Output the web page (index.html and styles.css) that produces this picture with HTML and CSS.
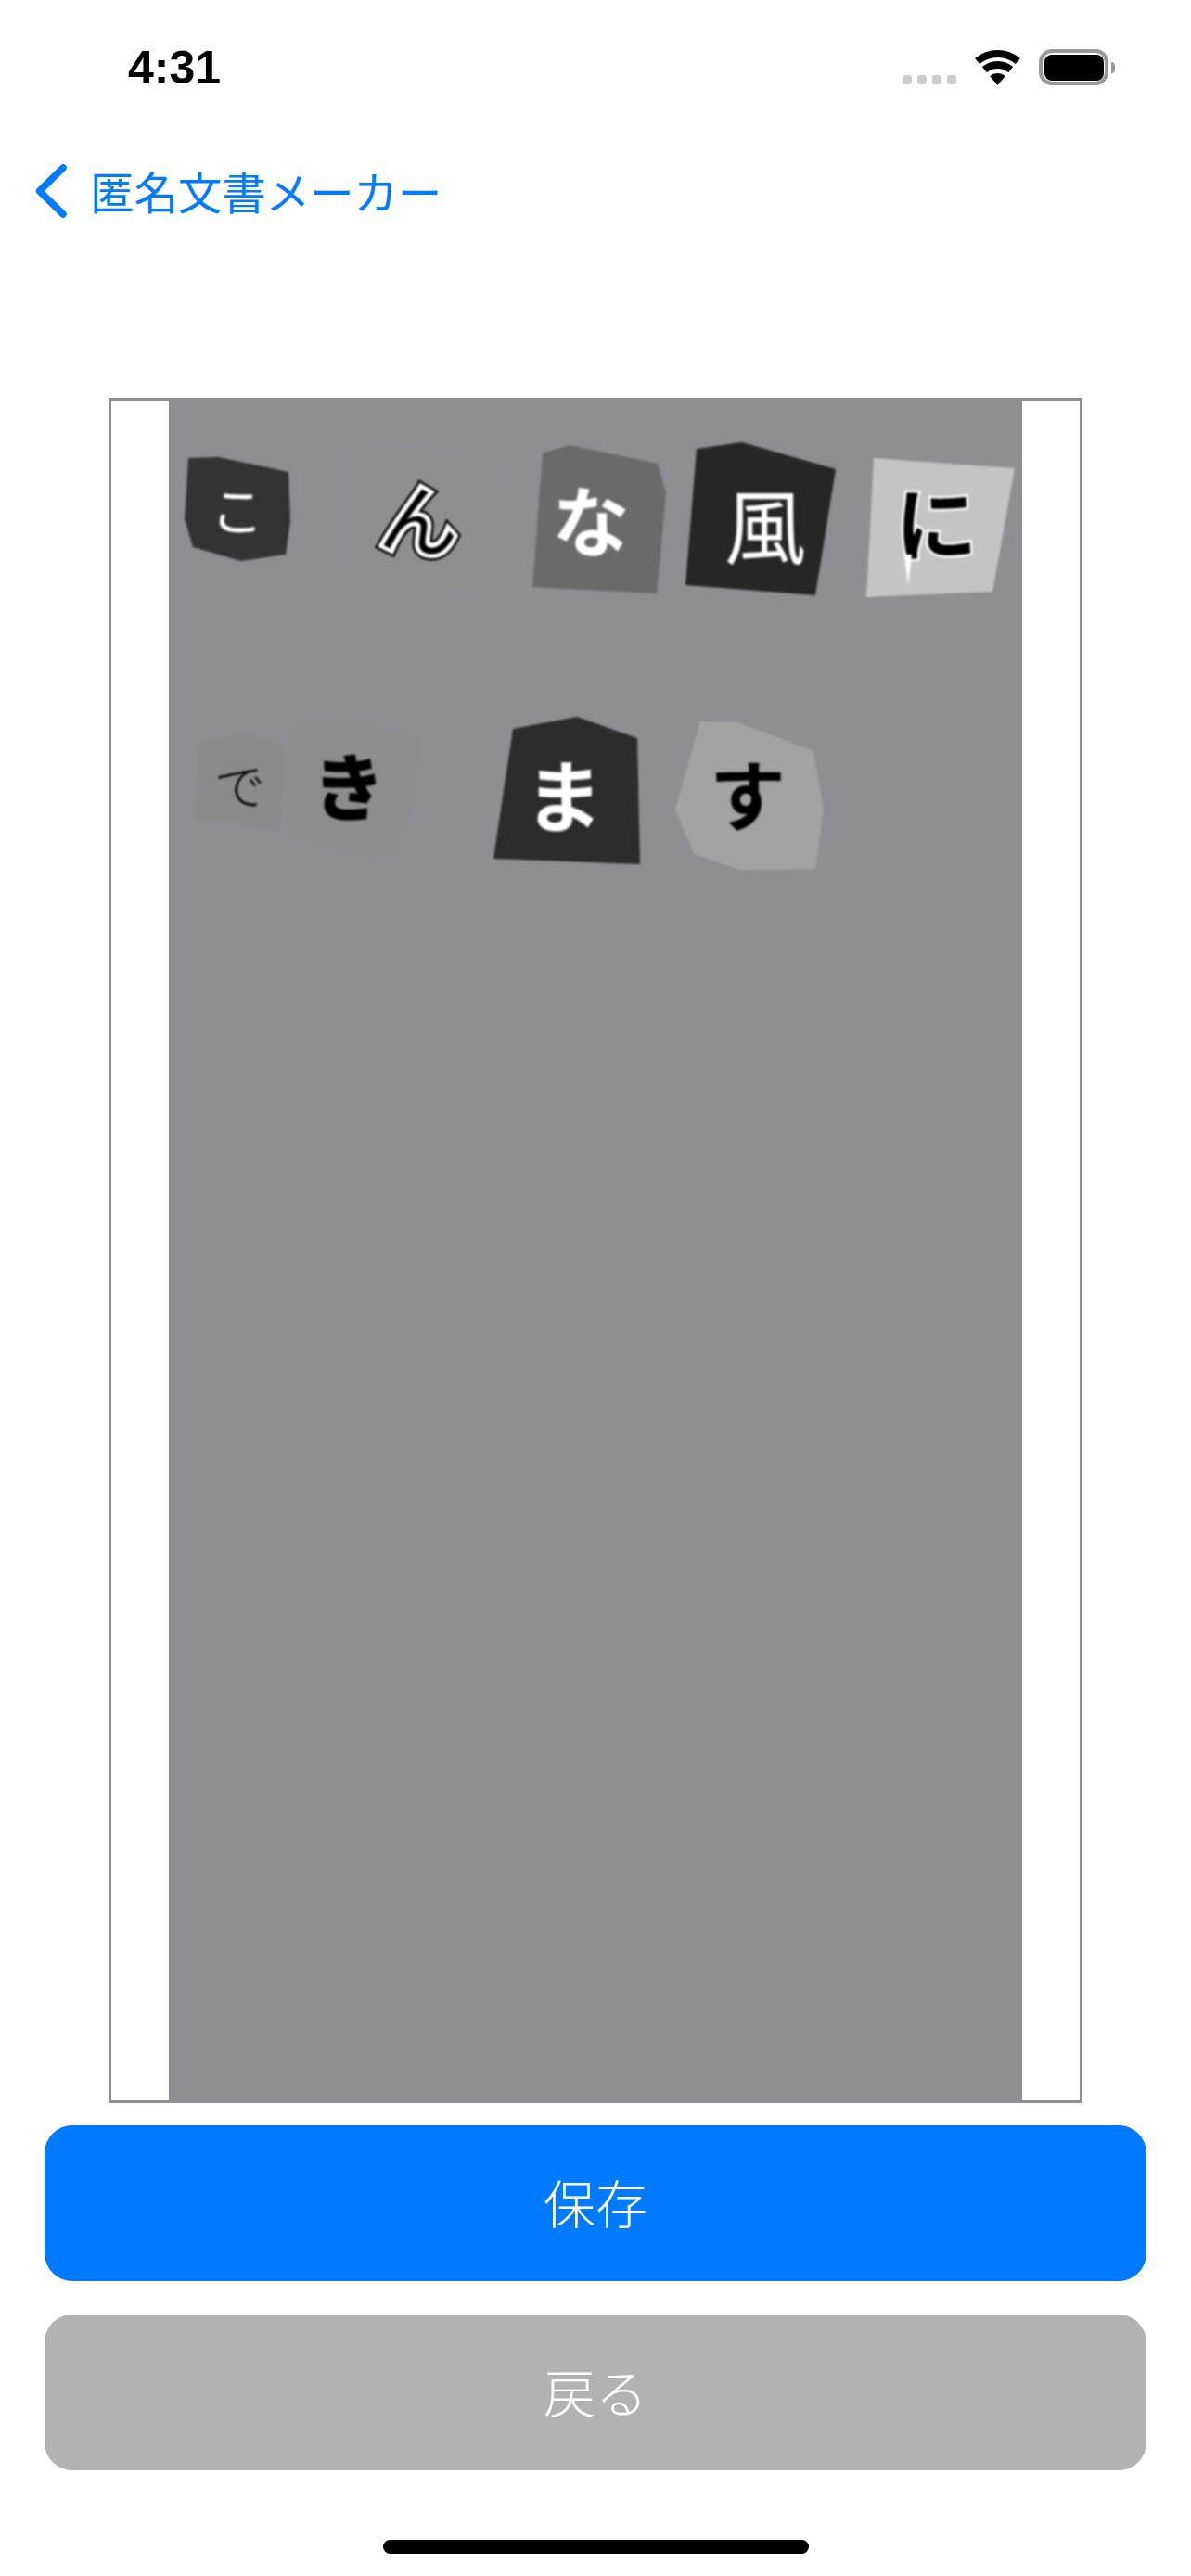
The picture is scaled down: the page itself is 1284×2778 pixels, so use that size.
FILE: index.html
```html
<!DOCTYPE html>
<html lang="ja">
<head>
<meta charset="utf-8">
<title>匿名文書メーカー</title>
<link rel="stylesheet" href="styles.css">
</head>
<body>
<div class="phone">
  <header class="status">
    <span class="time">4:31</span>
    <div class="status-icons">
      <div class="signal"><i></i><i></i><i></i><i></i></div>
      <svg class="wifi" viewBox="0 0 49 38" width="49" height="38">
        <path d="M0.1 8.9A38 38 0 0 1 48.9 8.9L43.8 15A30 30 0 0 0 5.2 15Z"/>
        <path d="M7.8 18.1A26 26 0 0 1 41.2 18.1L36.1 24.2A18 18 0 0 0 12.9 24.2Z"/>
        <path d="M16.1 28A13 13 0 0 1 32.9 28L24.5 38Z"/>
      </svg>
      <div class="battery"><div class="battery-level"></div></div>
      <div class="battery-cap"></div>
    </div>
  </header>
  <nav class="nav">
    <svg class="chevron" viewBox="0 0 36 58" width="36" height="58">
      <path d="M31 4L5.5 29L31 54"/>
    </svg>
    <span class="nav-title">匿名文書メーカー</span>
  </nav>
  <main class="frame">
    <div class="board">
      <div class="pieces">
        <div class="piece p1"><span class="glyph">こ</span></div>
        <div class="piece p2"><span class="glyph">ん</span></div>
        <div class="piece p3"><span class="glyph">な</span></div>
        <div class="piece p4"><span class="glyph">風</span></div>
        <div class="piece p5"><span class="glyph">に</span></div>
        <div class="piece p6"><span class="glyph">で</span></div>
        <div class="piece p7"><span class="glyph">き</span></div>
        <div class="piece p8"><span class="glyph">ま</span></div>
        <div class="piece p9"><span class="glyph">す</span></div>
      </div>
    </div>
  </main>
  <div class="actions">
    <button class="btn btn-save">保存</button>
    <button class="btn btn-back">戻る</button>
  </div>
  <div class="home-row"><div class="home-bar"></div></div>
</div>
</body>
</html>
```
FILE: styles.css
```css
* { box-sizing: border-box; }
html, body { margin: 0; padding: 0; background: #fff; }
body { font-family: "Noto Sans CJK JP", "Noto Sans", sans-serif; }

.phone {
  width: 1284px;
  height: 2778px;
  display: flex;
  flex-direction: column;
  overflow: hidden;
}

/* status bar */
.status {
  height: 148px;
  display: flex;
  justify-content: space-between;
  align-items: flex-start;
  padding: 53px 82px 0 138px;
}
.time {
  font-family: "Liberation Sans", Arial, sans-serif;
  font-weight: 700;
  font-size: 50px;
  line-height: 40px;
  color: #000;
}
.status-icons { display: flex; align-items: flex-start; margin-top: 0; }
.signal { display: flex; gap: 6px; margin-top: 28px; margin-right: 20px; }
.signal i { width: 10px; height: 10px; border-radius: 3px; background: #ccc; display: block; }
.wifi { fill: #000; margin-top: 1px; margin-right: 20px; display: block; }
.battery {
  width: 75px;
  height: 39px;
  border: 4px solid #9a9a9a;
  border-radius: 14px;
  padding: 1.5px;
}
.battery-level { width: 100%; height: 100%; background: #000; border-radius: 8px; }
.battery-cap {
  width: 4px;
  height: 12px;
  margin: 14px 0 0 3px;
  background: #999;
  border-radius: 0 6px 6px 0;
}

/* navigation */
.nav {
  height: 116px;
  display: flex;
  align-items: center;
  padding-left: 37px;
}
.chevron { fill: none; stroke: #007aff; stroke-width: 7.5; stroke-linecap: round; stroke-linejoin: round; display: block; }
.nav-title {
  margin-left: 24px;
  font-size: 47.4px;
  font-weight: 400;
  line-height: 60px;
  color: #007aff;
  white-space: nowrap;
}

/* picture frame */
.frame {
  margin: 165px 0 0 117px;
  width: 1050px;
  height: 1839px;
  border: 3px solid #8e8e93;
  display: flex;
  justify-content: center;
}
.board { position: relative; width: 920px; height: 100%; background: #8e8e93; }
.pieces { position: absolute; inset: 0; filter: blur(0.8px); }

.piece { position: absolute; }
.glyph {
  position: absolute;
  display: block;
  line-height: 1;
  white-space: nowrap;
}

.p1 { left: 17px; top: 61px; width: 114px; height: 112px; background: #333;
  clip-path: polygon(4px 1px, 36px 0, 112px 16px, 114px 69px, 109px 105px, 61px 112px, 9px 97px, 0 67px); }
.p1 .glyph { left: 57px; top: 58px; font-size: 57px; font-weight: 400; color: #fff;
  transform: translate(-50%, -55%) rotate(2deg); }

.p2 { left: 191px; top: 49px; width: 159px; height: 162px; background: #8f8f8f;
  clip-path: polygon(0 8px, 57px 0, 159px 20px, 157px 151px, 65px 162px, 7px 138px); }
.p2 .glyph { left: 81px; top: 80px; font-size: 84px; font-weight: 500; color: #000;
  -webkit-text-stroke: 13px #000; transform: translate(-50%, -55%) rotate(8deg); }
.p2 .glyph::before, .p2 .glyph::after {
  content: "ん";
  position: absolute;
  left: 0;
  top: 0;
}
.p2 .glyph::before { color: #fff; -webkit-text-stroke: 8px #fff; }
.p2 .glyph::after { color: #000; font-weight: 400; -webkit-text-stroke: 0 #000; }

.p3 { left: 392px; top: 48px; width: 144px; height: 160px; background: #6a6a6a;
  clip-path: polygon(11px 9px, 40px 0, 135px 20px, 144px 52px, 134px 160px, 0 153px); }
.p3 .glyph { left: 63px; top: 83px; font-size: 83px; font-weight: 700; color: #fff;
  transform: translate(-50%, -55%) rotate(1deg); }

.p4 { left: 557px; top: 45px; width: 162px; height: 165px; background: #262626;
  clip-path: polygon(12px 7px, 61px 0, 162px 29px, 140px 165px, 0 154px); }
.p4 .glyph { left: 86px; top: 90px; font-size: 88px; font-weight: 400; color: #fff;
  transform: translate(-50%, -55%); }

.p5 { left: 752px; top: 62px; width: 160px; height: 150px; background: #c4c4c4;
  clip-path: polygon(8px 0, 160px 11px, 136px 144px, 0 150px); }
.p5 .glyph { left: 75px; top: 71px; font-size: 88px; font-weight: 700; color: #000;
  -webkit-text-stroke: 5px #fff; paint-order: stroke fill; transform: translate(-50%, -55%) rotate(-2deg); }
.p5::after {
  content: "";
  position: absolute;
  left: 41px;
  top: 104px;
  width: 8px;
  height: 34px;
  background: #fff;
  clip-path: polygon(0 0, 100% 0, 50% 100%);
}

.p6 { left: 30px; top: 359px; width: 94px; height: 104px; background: #8b8b8b;
  clip-path: polygon(3px 9px, 52px 0, 91px 12px, 94px 34px, 89px 104px, 0 92px); }
.p6 .glyph { left: 47px; top: 58px; font-size: 54px; font-weight: 300; color: #000;
  transform: translate(-50%, -55%) rotate(-6deg); }

.p7 { left: 126px; top: 341px; width: 143px; height: 154px; background: #8d8d8d;
  clip-path: polygon(6px 14px, 61px 0, 143px 24px, 138px 84px, 118px 147px, 90px 154px, 6px 130px, 0 60px); }
.p7 .glyph { left: 68px; top: 76px; font-size: 78px; font-weight: 900; color: #000;
  transform: translate(-50%, -55%); }

.p8 { left: 350px; top: 341px; width: 158px; height: 159px; background: #2c2c2c;
  clip-path: polygon(21px 13px, 90px 0, 155px 23px, 158px 159px, 0 153px); }
.p8 .glyph { left: 76px; top: 86px; font-size: 84px; font-weight: 700; color: #fff;
  transform: translate(-50%, -55%); }

.p9 { left: 546px; top: 346px; width: 160px; height: 160px; background: #a3a3a3;
  clip-path: polygon(27px 0, 65px 0, 149px 32px, 160px 94px, 151px 159px, 69px 160px, 20px 143px, 0 95px); }
.p9 .glyph { left: 78px; top: 80px; font-size: 82px; font-weight: 700; color: #000;
  transform: translate(-50%, -55%); }

/* buttons */
.actions {
  margin-top: 24px;
  padding: 0 48px;
  display: flex;
  flex-direction: column;
  gap: 36px;
}
.btn {
  display: block;
  width: 100%;
  height: 168px;
  border: 0;
  border-radius: 30px;
  color: #fff;
  font-family: "Noto Sans CJK JP", sans-serif;
  font-size: 56px;
  font-weight: 300;
  padding: 0 0 6px;
}
.btn-save { background: #007aff; }
.btn-back { background: #b2b2b2; }

/* home indicator */
.home-row { margin-top: 75px; display: flex; justify-content: center; }
.home-bar { width: 459px; height: 15px; border-radius: 8px; background: #000; }
```
